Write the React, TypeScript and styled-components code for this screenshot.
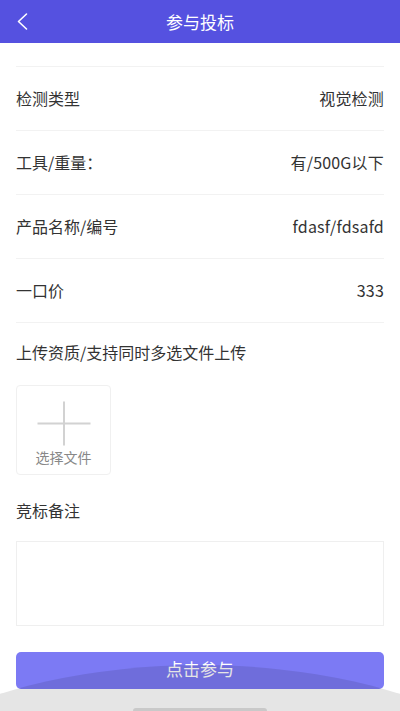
import React from "react";
import styled, { createGlobalStyle } from "styled-components";

const GlobalStyle = createGlobalStyle`
  html, body { margin: 0; padding: 0; background: #fff; }
  body { font-family: "Noto Sans CJK SC", "Noto Sans", sans-serif; }
  * { box-sizing: border-box; }
`;

const Page = styled.div`
  position: relative;
  width: 400px;
  height: 711px;
  overflow: hidden;
  background: #fff;
`;

const Header = styled.header`
  height: 43px;
  background: #5551e0;
  display: grid;
  grid-template-columns: 44px 1fr 44px;
  align-items: center;
`;

const BackButton = styled.div`
  display: flex;
  align-items: center;
  justify-content: flex-start;
  height: 100%;
`;

const Title = styled.h1`
  margin: 0;
  text-align: center;
  color: #fff;
  font-size: 17px;
  font-weight: 400;
  line-height: 42px;
`;

const Content = styled.main`
  padding: 0 16px;
  display: flex;
  flex-direction: column;
`;

const Stub = styled.div`
  height: 24px;
  border-bottom: 1px solid #f2f2f2;
`;

const Row = styled.div`
  height: 64px;
  padding-bottom: 2px;
  border-bottom: 1px solid #f2f2f2;
  display: flex;
  align-items: center;
  justify-content: space-between;
  font-size: 16px;
  color: #333;
`;

const Value = styled.span`
  letter-spacing: 0.2px;
`;

const Label = styled.div<{ $top: number }>`
  margin-top: ${(p) => p.$top}px;
  font-size: 16px;
  line-height: 22px;
  color: #333;
`;

const UploadBox = styled.div`
  margin-top: 22px;
  width: 95px;
  height: 90px;
  border: 1px solid #f0f0f0;
  border-radius: 4px;
  display: flex;
  flex-direction: column;
  align-items: center;
  padding-top: 15px;
`;

const UploadText = styled.span`
  margin-top: 1px;
  font-size: 14px;
  line-height: 20px;
  color: #888;
`;

const NoteBox = styled.div`
  margin-top: 20px;
  height: 85px;
  border: 1px solid #efefef;
`;

const SubmitButton = styled.button`
  margin-top: 26px;
  height: 37px;
  width: 100%;
  border: none;
  border-radius: 5px;
  background: #7c7af4;
  color: #fff;
  font-family: inherit;
  font-size: 17px;
  line-height: 34px;
  padding: 0 0 3px;
`;

const BottomShade = styled.div`
  position: absolute;
  left: -200px;
  top: 665px;
  width: 800px;
  height: 430px;
  border-radius: 50%;
  background: rgba(0, 0, 0, 0.1);
  pointer-events: none;
`;

const HomeIndicator = styled.div`
  position: absolute;
  left: 133px;
  top: 708px;
  width: 134px;
  height: 6px;
  border-radius: 3px;
  background: #c9c9c9;
`;

const rows: [string, string][] = [
  ["检测类型", "视觉检测"],
  ["工具/重量：", "有/500G以下"],
  ["产品名称/编号", "fdasf/fdsafd"],
  ["一口价", "333"],
];

export default function App() {
  return (
    <Page>
      <GlobalStyle />
      <Header>
        <BackButton>
          <svg width="44" height="43" viewBox="0 0 44 43">
            <polyline
              points="26.5,14 18.5,21.5 26.5,29"
              fill="none"
              stroke="#fff"
              strokeWidth="1.6"
              strokeLinecap="round"
              strokeLinejoin="round"
            />
          </svg>
        </BackButton>
        <Title>参与投标</Title>
        <div />
      </Header>
      <Content>
        <Stub />
        {rows.map(([k, v]) => (
          <Row key={k}>
            <span>{k}</span>
            <Value>{v}</Value>
          </Row>
        ))}
        <Label $top={18}>上传资质/支持同时多选文件上传</Label>
        <UploadBox>
          <svg width="54" height="45" viewBox="0 0 54 45">
            <line x1="0.5" y1="22.5" x2="53.5" y2="22.5" stroke="#d2d2d2" strokeWidth="2" />
            <line x1="27" y1="0.5" x2="27" y2="44.5" stroke="#d2d2d2" strokeWidth="2" />
          </svg>
          <UploadText>选择文件</UploadText>
        </UploadBox>
        <Label $top={24}>竞标备注</Label>
        <NoteBox />
        <SubmitButton>点击参与</SubmitButton>
      </Content>
      <BottomShade />
      <HomeIndicator />
    </Page>
  );
}
